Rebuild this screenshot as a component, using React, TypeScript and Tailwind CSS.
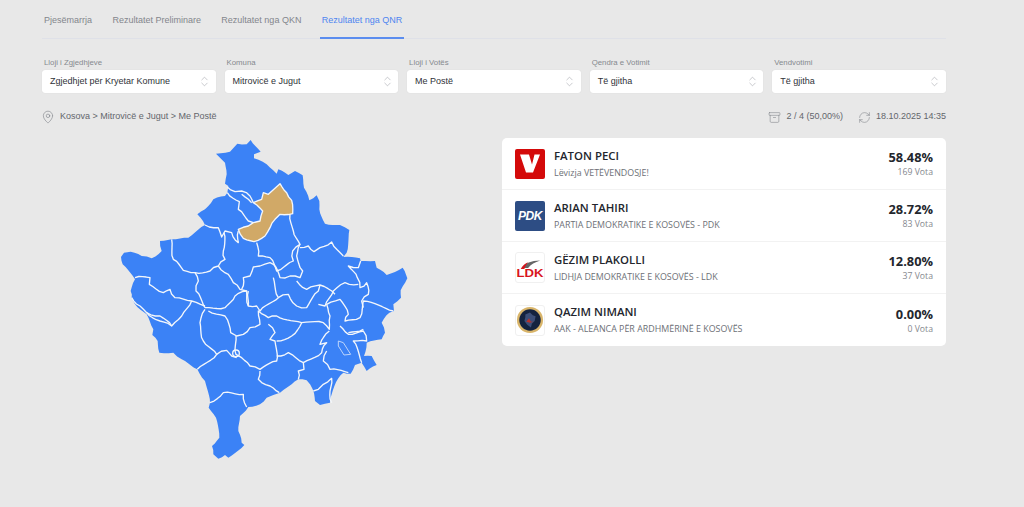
import { ChevronsUpDown, MapPin, Archive, RefreshCw } from "lucide-react";

const tabs = ["Pjesëmarrja", "Rezultatet Preliminare", "Rezultatet nga QKN", "Rezultatet nga QNR"];

const filters = [
  { label: "Lloji i Zgjedhjeve", value: "Zgjedhjet për Kryetar Komune" },
  { label: "Komuna", value: "Mitrovicë e Jugut" },
  { label: "Lloji i Votës", value: "Me Postë" },
  { label: "Qendra e Votimit", value: "Të gjitha" },
  { label: "Vendvotimi", value: "Të gjitha" },
];

const candidates = [
  { name: "FATON PECI", party: "Lëvizja VETËVENDOSJE!", pct: "58.48%", votes: "169 Vota", logo: "vv" },
  { name: "ARIAN TAHIRI", party: "PARTIA DEMOKRATIKE E KOSOVËS - PDK", pct: "28.72%", votes: "83 Vota", logo: "pdk" },
  { name: "GËZIM PLAKOLLI", party: "LIDHJA DEMOKRATIKE E KOSOVËS - LDK", pct: "12.80%", votes: "37 Vota", logo: "ldk" },
  { name: "QAZIM NIMANI", party: "AAK - ALEANCA PËR ARDHMËRINË E KOSOVËS", pct: "0.00%", votes: "0 Vota", logo: "aak" },
];

// map is traced in a 930 wide grid, 3 units to a pixel
const outline =
  "318,68 360,62 382,38 410,40 422,27 452,62 432,70 432,82 470,100 500,128 505,115 535,132 555,120 578,133 582,170 598,208 620,193 628,210 628,235 645,278 690,282 718,297 710,365 700,378 750,382 752,390 795,390 800,410 830,432 878,410 892,442 872,478 873,500 850,520 852,540 838,545 815,575 825,605 815,625 770,635 762,675 785,675 800,702 770,720 755,695 735,702 722,728 700,725 685,742 665,790 660,815 630,822 615,810 608,775 590,748 565,745 545,760 510,785 490,792 470,800 450,820 415,828 390,855 385,900 395,935 403,942 355,980 345,972 325,983 310,970 306,945 328,920 318,860 296,830 300,815 285,750 262,715 215,685 190,665 148,665 143,630 127,612 130,595 110,550 75,520 65,502 62,480 75,445 38,400 33,378 42,365 62,362 95,375 125,382 155,360 150,330 185,325 235,320 285,282 262,250 285,235 310,205 345,195 352,185 355,165 345,158 350,130 345,95";

const tan =
  "510,158 530,185 545,208 548,248 510,250 495,265 480,290 465,315 432,332 400,322 385,295 415,285 430,275 450,270 458,240 430,215 455,205 460,185 475,190";

const borders = [
  "352,168 375,182 395,180 420,195 430,215",
  "352,185 388,212 385,235 415,270 430,275",
  "395,190 415,205 425,215",
  "540,250 550,300 570,340 548,360 550,390 500,420 480,380 445,375 440,335",
  "285,282 325,290 335,318 345,300 365,305 385,335 385,300",
  "342,305 340,360 345,385 325,405 300,420 255,425 220,418 190,385 185,325",
  "570,340 560,375 578,420 570,440 540,435 510,440 490,400 480,395 450,405 430,408 420,435 400,440 395,475",
  "570,350 595,345 612,362 630,350 665,333 700,375",
  "752,390 745,410 715,405 742,440 750,470 770,455 775,490 755,510 760,530",
  "325,405 355,430 370,455 390,475 410,480 415,525",
  "255,425 265,450 258,480 285,530",
  "75,440 120,440 118,460 160,485 180,475 195,500 245,510 285,525",
  "65,500 90,525 110,545 150,555 185,585 215,555 245,510",
  "110,545 150,570 185,585",
  "285,530 345,530 375,495 410,480",
  "285,535 270,575 280,630 320,670 262,715",
  "295,540 345,555 362,605 380,615 400,610 420,590 450,580 445,540 475,560 500,555 575,575 640,575 658,595 660,555 650,520 690,505 715,550 705,570 750,560 760,510 850,540",
  "378,615 378,670 395,680 420,705 450,715 500,690 495,630 480,625 495,605 475,580",
  "500,630 545,615 575,575",
  "320,670 350,658 365,675 380,680",
  "500,675 535,665 580,695 635,665 650,635 630,640 658,600",
  "450,720 445,745 480,765 508,785",
  "580,695 582,715 565,720 565,745",
  "650,660 640,690 660,715 715,725",
  "690,585 715,610 760,600 770,630 730,630 755,695",
  "415,480 415,525 440,525 450,540 505,500 490,440",
  "505,500 535,490 560,525 590,530 625,480 630,462",
  "625,520 645,525 670,480 705,455 745,460",
  "560,450 590,475 630,462 675,490",
  "300,815 340,785 400,790 410,828",
  "715,605 760,595",
  "610,780 625,775 640,760 665,742 660,780 665,815",
];

// roughens a traced line so that it reads like a real boundary
function roughen(points: string, amount: number) {
  const pts = points.split(" ").map((p) => p.split(",").map(Number));
  const out: string[] = [];
  pts.forEach(([x, y], i) => {
    out.push(`${x},${y}`);
    const next = pts[i + 1];
    if (!next) return;
    const dx = next[0] - x;
    const dy = next[1] - y;
    const len = Math.hypot(dx, dy);
    const steps = Math.floor(len / 11);
    for (let s = 1; s < steps; s++) {
      const t = s / steps;
      const off = Math.sin((x + y + s) * 12.9898) * amount;
      out.push(`${(x + dx * t - (dy / len) * off).toFixed(1)},${(y + dy * t + (dx / len) * off).toFixed(1)}`);
    }
  });
  return out.join(" ");
}

function KosovoMap() {
  return (
    <svg viewBox="0 0 930 1005" className="h-[335px] w-[310px] shrink-0">
      <polygon points={roughen(outline, 2)} fill="#3b82f6" />
      <g fill="none" stroke="#f4f7fb" strokeWidth="4" strokeLinejoin="round">
        {borders.map((line) => (
          <polyline key={line} points={roughen(line, 3.5)} />
        ))}
      </g>
      <polygon points="685,630 700,635 722,670 702,672 685,645" fill="none" stroke="#bcd4fb" strokeWidth="3" />
      <circle cx="378" cy="667" r="10" fill="none" stroke="#f4f7fb" strokeWidth="4" />
      <polygon points={roughen(tan, 2)} fill="#d1a967" stroke="#f4f7fb" strokeWidth="4" strokeLinejoin="round" />
    </svg>
  );
}

function PartyLogo({ kind }: { kind: string }) {
  if (kind === "vv") {
    return (
      <div className="h-[30px] w-[30px] shrink-0 rounded-[2px] bg-[#d40a0a]">
        <svg viewBox="0 0 30 30" className="h-[30px] w-[30px]">
          <path d="M5 5.5h9l3 10 2.5-10H25l-7 18h-7z" fill="#fff" />
        </svg>
      </div>
    );
  }
  if (kind === "pdk") {
    return (
      <div className="flex h-[30px] w-[30px] shrink-0 items-center justify-center rounded-[2px] bg-[#2d4d84] font-['Liberation_Sans',sans-serif] text-[12px] font-bold italic tracking-[-0.5px] text-white">
        PDK
      </div>
    );
  }
  if (kind === "ldk") {
    return (
      <div className="h-[31px] w-[30px] shrink-0 rounded-[3px] border border-[#f0f0f0] bg-white">
        <svg viewBox="0 0 30 31" className="h-[29px] w-[28px]">
          <path d="M6 16C10 11 16 8 26 8c-6 2-10 4-13 8z" fill="#666" />
          <path d="M5 17c2-3 5-6 8-7-2 2-3 4-4 7z" fill="#d8141c" />
          <text
            x="15"
            y="26"
            textAnchor="middle"
            textLength="29"
            lengthAdjust="spacingAndGlyphs"
            fontFamily="Liberation Sans"
            fontWeight="700"
            fontSize="12"
            fill="#d8141c"
          >
            LDK
          </text>
        </svg>
      </div>
    );
  }
  return (
    <div className="flex h-[31px] w-[30px] shrink-0 items-center justify-center rounded-[3px] border border-[#f0f0f0] bg-white">
      <svg viewBox="0 0 30 30" className="h-[30px] w-[30px]">
        <circle cx="15" cy="15" r="14" fill="#d9b56a" />
        <circle cx="15" cy="15" r="11.5" fill="#14233f" />
        <path d="M10 9l5-2 3 3 3 1-1 5-3 3-1 4-4-3-3-4 1-4z" fill="#3c4f78" />
        <path d="M11 17l3-4 2 4h3l-4 1z" fill="#b8322c" />
      </svg>
    </div>
  );
}

export default function App() {
  return (
    <div className="h-[507px] w-full overflow-hidden bg-[#e8e8e8] pl-[42px] pr-[78px] font-['Liberation_Sans',sans-serif]">
      {/* Tabs */}
      <div className="flex h-[39px] gap-[16.4px] border-b border-[#dfe1e8]">
        {tabs.map((tab, i) => (
          <div
            key={tab}
            className={
              i === 3
                ? "-mb-px border-b-2 border-[#5b8def] px-[2px] pt-[14px] text-[9px] leading-[13px] text-[#4f86f0]"
                : "px-[2px] pt-[14px] text-[9px] leading-[13px] text-[#83868c]"
            }
          >
            {tab}
          </div>
        ))}
      </div>

      {/* Filters */}
      <div className="mt-[18px] grid grid-cols-5 gap-[8.8px]">
        {filters.map((f) => (
          <div key={f.label}>
            <div className="mb-[2px] pl-[2px] text-[7.8px] leading-[11px] text-[#85888e]">{f.label}</div>
            <div className="flex h-[23px] items-center justify-between rounded-[3px] bg-white pl-[8px] pr-[4.5px] text-[9px] text-[#2f3238] shadow-[0_0_1px_rgba(0,0,0,0.12)]">
              <span>{f.value}</span>
              <ChevronsUpDown size={13} strokeWidth={1} className="text-[#9a9da3]" />
            </div>
          </div>
        ))}
      </div>

      {/* Breadcrumb + stats */}
      <div className="mt-[16px] flex h-[16px] items-center justify-between text-[9px] text-[#63666c]">
        <div className="flex items-center gap-[5px] -ml-px">
          <MapPin size={14} strokeWidth={1} className="text-[#7b7e84]" />
          <span>Kosova &gt; Mitrovicë e Jugut &gt; Me Postë</span>
        </div>
        <div className="flex items-center">
          <Archive size={13} strokeWidth={1} className="mr-[5px] text-[#7b7e84]" />
          <span className="mr-[15px]">2 / 4 (50,00%)</span>
          <RefreshCw size={13} strokeWidth={1} className="mr-[5px] text-[#7b7e84]" />
          <span>18.10.2025 14:35</span>
        </div>
      </div>

      {/* Map + results */}
      <div className="mt-[13px] flex items-start">
        <div className="w-[460px] pl-[68px]">
          <div className="-mt-[7px]">
            <KosovoMap />
          </div>
        </div>
        <div className="flex-1 overflow-hidden rounded-[5px] bg-white font-['Open_Sans',sans-serif]">
          {candidates.map((c, i) => (
            <div
              key={c.name}
              className={
                i < 3
                  ? "flex h-[52px] items-center justify-between border-b border-[#f2f2f2] pl-[13px] pr-[13px]"
                  : "flex h-[52px] items-center justify-between pl-[13px] pr-[13px]"
              }
            >
              <div className="flex items-center gap-[9px]">
                <PartyLogo kind={c.logo} />
                <div className="-mt-px">
                  <div className="text-[11.4px] font-semibold leading-[16px] text-[#23262d]">{c.name}</div>
                  <div className="mt-[3px] text-[8.9px] leading-[12px] text-[#6d7076]">{c.party}</div>
                </div>
              </div>
              <div className="text-right">
                <div className="text-[12.8px] font-bold leading-[17px] text-[#23262d]">{c.pct}</div>
                <div className="text-[8.7px] leading-[12px] text-[#85888e]">{c.votes}</div>
              </div>
            </div>
          ))}
        </div>
      </div>
    </div>
  );
}
